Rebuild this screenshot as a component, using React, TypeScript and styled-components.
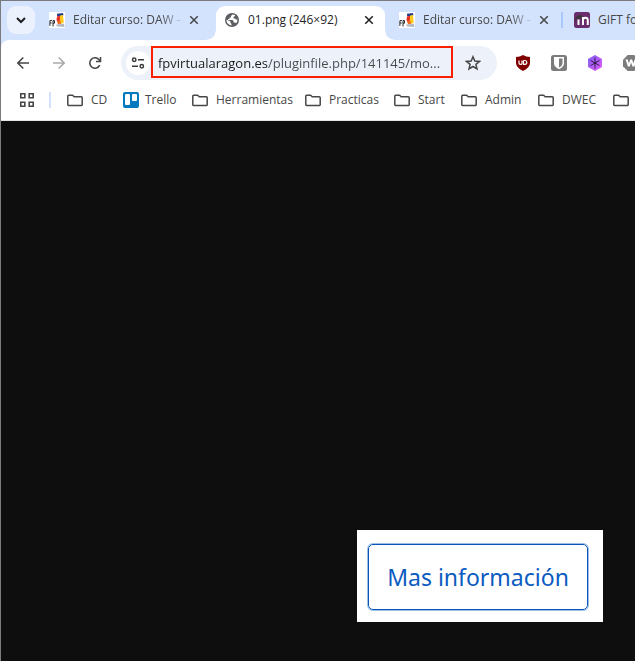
import React from "react";
import styled, { createGlobalStyle, css } from "styled-components";

const GlobalStyle = createGlobalStyle`
  *, *::before, *::after { box-sizing: border-box; }
  html, body, #root { height: 100%; margin: 0; }
  body { font-family: "Open Sans", "Noto Sans", sans-serif; font-size: 12px; line-height: 16px; color: #474747; overflow: hidden; }
  button, input { font: inherit; color: inherit; border: 0; background: none; padding: 0; margin: 0; }
  svg { display: block; flex: none; }
`;

const Window = styled.div`
  height: 100vh;
  display: flex;
  flex-direction: column;
  overflow: hidden;
  background: #d3e3fd;
  border-top: 1px solid #7b7b7f;
  border-left: 1px solid #7b7b7f;
`;

const TabStrip = styled.div`
  display: flex;
  height: 39px;
  flex: none;
  padding: 5px 0 0 6px;
`;

const TabSearch = styled.button`
  display: flex;
  align-items: center;
  justify-content: center;
  flex: none;
  width: 28px;
  height: 28px;
  margin-right: 6px;
  border-radius: 9px;
  background: #ebf1fd;
`;

const Tab = styled.div<{ $active?: boolean; $divided?: boolean }>`
  position: relative;
  display: flex;
  align-items: center;
  flex: none;
  width: 169px;
  height: 34px;
  margin-right: 6px;
  padding: 0 11px 6px 8px;
  ${(p) =>
    p.$active &&
    css`
      background: #fff;
      border-radius: 9px 9px 0 0;
      color: #1f1f1f;
      &::before,
      &::after {
        content: "";
        position: absolute;
        bottom: 0;
        width: 9px;
        height: 9px;
      }
      &::before {
        right: 100%;
        background: radial-gradient(circle at 0 0, transparent 8px, #fff 9px);
      }
      &::after {
        left: 100%;
        background: radial-gradient(circle at 100% 0, transparent 8px, #fff 9px);
      }
    `}
  ${(p) =>
    p.$divided &&
    css`
      &::after {
        content: "";
        position: absolute;
        right: -3px;
        top: 6px;
        width: 2px;
        height: 16px;
        background: #a8c7fa;
      }
    `}
`;

const TabTitle = styled.button<{ $faded?: boolean }>`
  flex: 1;
  min-width: 0;
  margin-left: 8px;
  white-space: nowrap;
  text-align: left;
  ${(p) =>
    p.$faded &&
    css`
      mask-image: linear-gradient(to right, #000 calc(100% - 24px), transparent);
    `}
`;

const CloseTab = styled.button`
  display: flex;
  flex: none;
  margin-left: 4px;
`;

const Toolbar = styled.div`
  display: flex;
  align-items: center;
  flex: none;
  height: 46px;
  padding-left: 14px;
  background: #fff;
  border-top-left-radius: 8px;
`;

const NavButton = styled.button`
  display: flex;
  flex: none;
  width: 16px;
  margin-right: 20px;
`;

const AddressBar = styled.div`
  display: flex;
  align-items: center;
  flex: none;
  width: 376px;
  height: 34px;
  margin: 0 18px 0 -2px;
  padding-left: 5px;
  border-radius: 17px;
  background: #edf2fa;
`;

const SiteInfo = styled.button`
  display: flex;
  align-items: center;
  justify-content: center;
  flex: none;
  width: 24px;
  height: 24px;
  border-radius: 50%;
  background: #fff;
`;

const Highlight = styled.div`
  display: flex;
  align-items: center;
  flex: none;
  width: 302px;
  height: 32px;
  margin: 0 12px 2px 1px;
  padding: 1px 0 0 5px;
  border: 2px solid #fb1f02;
`;

const AddressInput = styled.input`
  width: 100%;
  height: 24px;
  font-size: 13px;
  outline: 0;
  color: transparent;
  caret-color: #1f1f1f;
  background: linear-gradient(to right, #1a1a1a 110px, #474a4d 110px);
  background-clip: text;
  -webkit-background-clip: text;
`;

const Extension = styled.button`
  display: flex;
  flex: none;
  width: 16px;
  margin-right: 20px;
`;

const BookmarksBar = styled.nav`
  display: flex;
  align-items: center;
  flex: none;
  height: 35px;
  padding: 0 0 7px 18px;
  background: #fff;
  border-bottom: 1px solid #e4e6ea;
`;

const AppsButton = styled.button`
  display: flex;
  flex: none;
  width: 16px;
`;

const Divider = styled.span`
  flex: none;
  width: 2px;
  height: 16px;
  margin: 0 16px 0 14px;
  background: #d3e3fd;
`;

const Bookmark = styled.a<{ $width: number; $gap?: number }>`
  display: flex;
  align-items: center;
  flex: none;
  width: ${(p) => p.$width}px;
  gap: ${(p) => p.$gap ?? 8}px;
  color: inherit;
  text-decoration: none;
  white-space: nowrap;
`;

const Viewport = styled.main`
  flex: 1;
  display: flex;
  align-items: flex-end;
  justify-content: flex-end;
  padding: 0 32px 39px 0;
  background: #0e0e0e;
`;

const Picture = styled.div`
  display: flex;
  padding: 14px 15px 12px 11px;
  background: #fff;
`;

const InfoButton = styled.button`
  width: 220px;
  height: 66px;
  border: 1px solid #0b55b8;
  border-radius: 5px;
  box-shadow: 0 0 0 1px #9dc0e8;
  color: #0b5bc0;
  font-family: "Noto Sans", "Open Sans", sans-serif;
  font-size: 23px;
  line-height: 32px;
`;

const Stroke = ({ d, size = 16, color = "#474747", width = 2 }: { d: string; size?: number; color?: string; width?: number }) => (
  <svg width={size} height={size} viewBox="0 0 16 16" fill="none" stroke={color} strokeWidth={width} aria-hidden="true">
    <path d={d} />
  </svg>
);

const CourseIcon = () => (
  <svg width="16" height="16" viewBox="0 0 16 16" aria-hidden="true">
    <path fill="#fff" d="M0 0h16v16H0z" />
    <path d="M.9 14V8.600H3M.9 11H2.700M4 14.500V8.600h1.500v2.600H4" fill="none" stroke="#252830" strokeWidth="1" />
    <path fill="#263b86" d="m8 1.800 6-.8.4 2.200-6.200 1.400z" />
    <path fill="#e72d24" d="m8 4.500 3-.8 1 5.500-3 1.800-1.500-3z" />
    <path fill="#ffc91d" d="m11 3.700 3-.7.8 7.500-3 1.500-1-3z" />
    <path fill="#ef6a20" d="m8 8.500 3.500.500.500 3-3 .3z" />
    <path fill="#b3b9c2" d="m7 12.500 8-.8.500 3.300-7.500-.5z" />
  </svg>
);

const GlobeIcon = () => (
  <svg width="16" height="16" viewBox="0 0 16 16" aria-hidden="true">
    <circle cx="8" cy="8" r="7" fill="#5a5d61" />
    <path fill="#fff" d="M8.500 2.500 7 4v1.500H5.500V7H4v1h4.500l1 1v1.500H11l1 .8a5.500 5.500 0 0 0 1.500-3.800H11.500V6.500H9.500V5l1.500-1V3a5 5 0 0 0-2.500-.500zM2.500 7.500a5.500 5.500 0 0 0 5 6V12L6.500 11V9.500z" />
  </svg>
);

const MoodleIcon = () => (
  <svg width="16" height="16" viewBox="0 0 16 16" aria-hidden="true">
    <rect width="16" height="16" rx="2.500" fill="#6b2c6e" />
    <path d="M4.500 7.500V13M9 13V5M9 7.800q.3-2 2.400-2 2.400 0 2.400 2.400V13" fill="none" stroke="#fff" strokeWidth="2" />
    <path fill="#3b3439" d="m1 5.500 5-2.700 3 .9-2.800 3.100-3-.3-1 .5v3h-.8V6.500z" />
  </svg>
);

const FolderIcon = () => (
  <svg width="16" height="16" viewBox="0 0 16 16" fill="none" stroke="#474747" strokeWidth="1.500" strokeLinejoin="round" aria-hidden="true">
    <path d="M.8 12.800V4q0-.8.8-.8h4l1.600 1.600h7.200q.8 0 .8.800v7.200q0 .6-.6.600H1.400q-.6 0-.6-.6z" />
  </svg>
);

const TrelloIcon = () => (
  <svg width="16" height="16" viewBox="0 0 16 16" aria-hidden="true">
    <rect width="16" height="16" rx="2" fill="#0079bf" />
    <rect x="2" y="2" width="5" height="11" rx="1" fill="#fff" />
    <rect x="9" y="2" width="5" height="7" rx="1" fill="#fff" />
  </svg>
);

const ShieldIcon = () => (
  <svg width="16" height="16" viewBox="0 0 16 16" aria-hidden="true">
    <path fill="#800000" d="M8 0q3 2 7 2v6q0 4.500-7 8-7-3.500-7-8V2q4 0 7-2z" />
    <path d="M4 5.500V8q0 1.300 1.300 1.300h.9q.8 0 .8-.8v-3M8.500 5.500v3.800h1.300q2 0 2-1.900t-2-1.900H8.500" fill="none" stroke="#fff" strokeWidth="1.200" />
  </svg>
);

const VaultIcon = () => (
  <svg width="16" height="16" viewBox="0 0 16 16" aria-hidden="true">
    <rect width="16" height="16" rx="2.500" fill="#7c7c7c" />
    <path fill="#fff" d="M3 2h10v6.500q0 3.200-5 5.800-5-2.600-5-5.800z" />
    <path fill="#7c7c7c" d="M8 3.500h3.500v5q0 2-3.500 4z" />
  </svg>
);

const HexIcon = () => (
  <svg width="16" height="16" viewBox="0 0 16 16" aria-hidden="true">
    <defs>
      <linearGradient id="hex" x1="0" y1="0" x2="1" y2="1">
        <stop offset="0" stopColor="#7e5cf5" />
        <stop offset="1" stopColor="#e45cf8" />
      </linearGradient>
    </defs>
    <path fill="url(#hex)" d="m8 0 7 4v8l-7 4-7-4V4z" />
    <path d="M8 2.500v11M3.500 5.400l9 5.200M3.500 10.600l9-5.200" stroke="#35204f" strokeWidth="1" />
    <circle cx="8" cy="8" r="1.300" fill="#35204f" />
  </svg>
);

const OctagonIcon = () => (
  <svg width="16" height="16" viewBox="0 0 16 16" aria-hidden="true">
    <path fill="#7c7c7c" d="M4.700 0h6.600L16 4.700v6.600L11.300 16H4.700L0 11.300V4.700z" />
    <path fill="#fff" d="M2.500 4.500h2.200l1.200 4 1.300-4h1.900l1.300 4 1.200-4h2.200l-2.400 7H9.500L8.100 7.500 6.800 11.500H4.900z" />
  </svg>
);

const TuneIcon = () => (
  <svg width="14" height="14" viewBox="0 0 14 14" fill="none" stroke="#3b3b3b" strokeWidth="1.500" aria-hidden="true">
    <circle cx="3.200" cy="3.700" r="1.700" />
    <path d="M7 3.700h6M1 10.300h6" />
    <circle cx="10.800" cy="10.300" r="1.700" />
  </svg>
);

const StarIcon = () => (
  <svg width="16" height="16" viewBox="0 0 16 16" fill="none" stroke="#474747" strokeWidth="1.500" aria-hidden="true">
    <path d="m8 1.700 1.800 4.300 4.700.4-3.600 3 1.100 4.600-4-2.500-4 2.500 1.100-4.600-3.600-3L6.200 6z" />
  </svg>
);

const ReloadIcon = () => (
  <svg width="16" height="16" viewBox="0 0 16 16" fill="none" stroke="#474747" strokeWidth="1.600" aria-hidden="true">
    <path d="M12.700 10.200A5.200 5.200 0 1 1 12 4.700L13.300 6" />
    <path d="M13.500 2v4.500H9" />
  </svg>
);

const AppsIcon = () => (
  <svg width="16" height="16" viewBox="0 0 16 16" fill="none" stroke="#474747" strokeWidth="1.600" aria-hidden="true">
    <path d="M1.800 1.800h4v4h-4zM10.200 1.800h4v4h-4zM1.800 10.200h4v4h-4zM10.200 10.200h4v4h-4z" />
  </svg>
);

const tabs = [
  { title: "Editar curso: DAW -", icon: <CourseIcon />, faded: true },
  { title: "01.png (246×92)", icon: <GlobeIcon />, active: true },
  { title: "Editar curso: DAW -", icon: <CourseIcon />, divided: true, faded: true },
  { title: "GIFT fo", icon: <MoodleIcon /> },
];

const bookmarks = [
  { name: "CD", width: 56, icon: <FolderIcon /> },
  { name: "Trello", width: 69, gap: 6, icon: <TrelloIcon /> },
  { name: "Herramientas", width: 113, icon: <FolderIcon /> },
  { name: "Practicas", width: 89, icon: <FolderIcon /> },
  { name: "Start", width: 67, icon: <FolderIcon /> },
  { name: "Admin", width: 77, icon: <FolderIcon /> },
  { name: "DWEC", width: 75, icon: <FolderIcon /> },
  { name: "", width: 16, icon: <FolderIcon /> },
];

const extensions = [
  { name: "uBlock", icon: <ShieldIcon /> },
  { name: "Bitwarden", icon: <VaultIcon /> },
  { name: "Snowflake", icon: <HexIcon /> },
  { name: "Wappalyzer", icon: <OctagonIcon /> },
];

export default function App() {
  return (
    <>
      <GlobalStyle />
      <Window>
        <TabStrip>
          <TabSearch aria-label="Buscar pestañas">
            <Stroke d="m4 6 4 4 4-4" color="#1f1f1f" />
          </TabSearch>
          {tabs.map((tab, i) => (
            <Tab key={i} $active={tab.active} $divided={tab.divided}>
              {tab.icon}
              <TabTitle $faded={tab.faded}>{tab.title}</TabTitle>
              <CloseTab aria-label="Cerrar">
                <Stroke d="m2 2 12 12M14 2 2 14" size={10} color={tab.active ? "#1f1f1f" : "#474747"} width={2.4} />
              </CloseTab>
            </Tab>
          ))}
        </TabStrip>
        <Toolbar>
          <NavButton aria-label="Atrás">
            <Stroke d="M14 8H3M8.300 2.500 2.800 8l5.500 5.500" width={1.6} />
          </NavButton>
          <NavButton aria-label="Adelante" disabled>
            <Stroke d="M2 8h11M7.700 2.500 13.200 8l-5.500 5.500" color="#a9a9a9" width={1.6} />
          </NavButton>
          <NavButton aria-label="Recargar">
            <ReloadIcon />
          </NavButton>
          <AddressBar>
            <SiteInfo aria-label="Información del sitio">
              <TuneIcon />
            </SiteInfo>
            <Highlight>
              <AddressInput aria-label="Dirección" defaultValue="fpvirtualaragon.es/pluginfile.php/141145/mo..." />
            </Highlight>
            <NavButton aria-label="Añadir a marcadores">
              <StarIcon />
            </NavButton>
          </AddressBar>
          {extensions.map((ext) => (
            <Extension key={ext.name} aria-label={ext.name}>
              {ext.icon}
            </Extension>
          ))}
        </Toolbar>
        <BookmarksBar aria-label="Marcadores">
          <AppsButton aria-label="Aplicaciones">
            <AppsIcon />
          </AppsButton>
          <Divider />
          {bookmarks.map((b) => (
            <Bookmark key={b.name} href="#" $width={b.width} $gap={b.gap} aria-label={b.name || "Carpeta"}>
              {b.icon}
              {b.name && <span>{b.name}</span>}
            </Bookmark>
          ))}
        </BookmarksBar>
        <Viewport>
          <Picture>
            <InfoButton>Mas información</InfoButton>
          </Picture>
        </Viewport>
      </Window>
    </>
  );
}
